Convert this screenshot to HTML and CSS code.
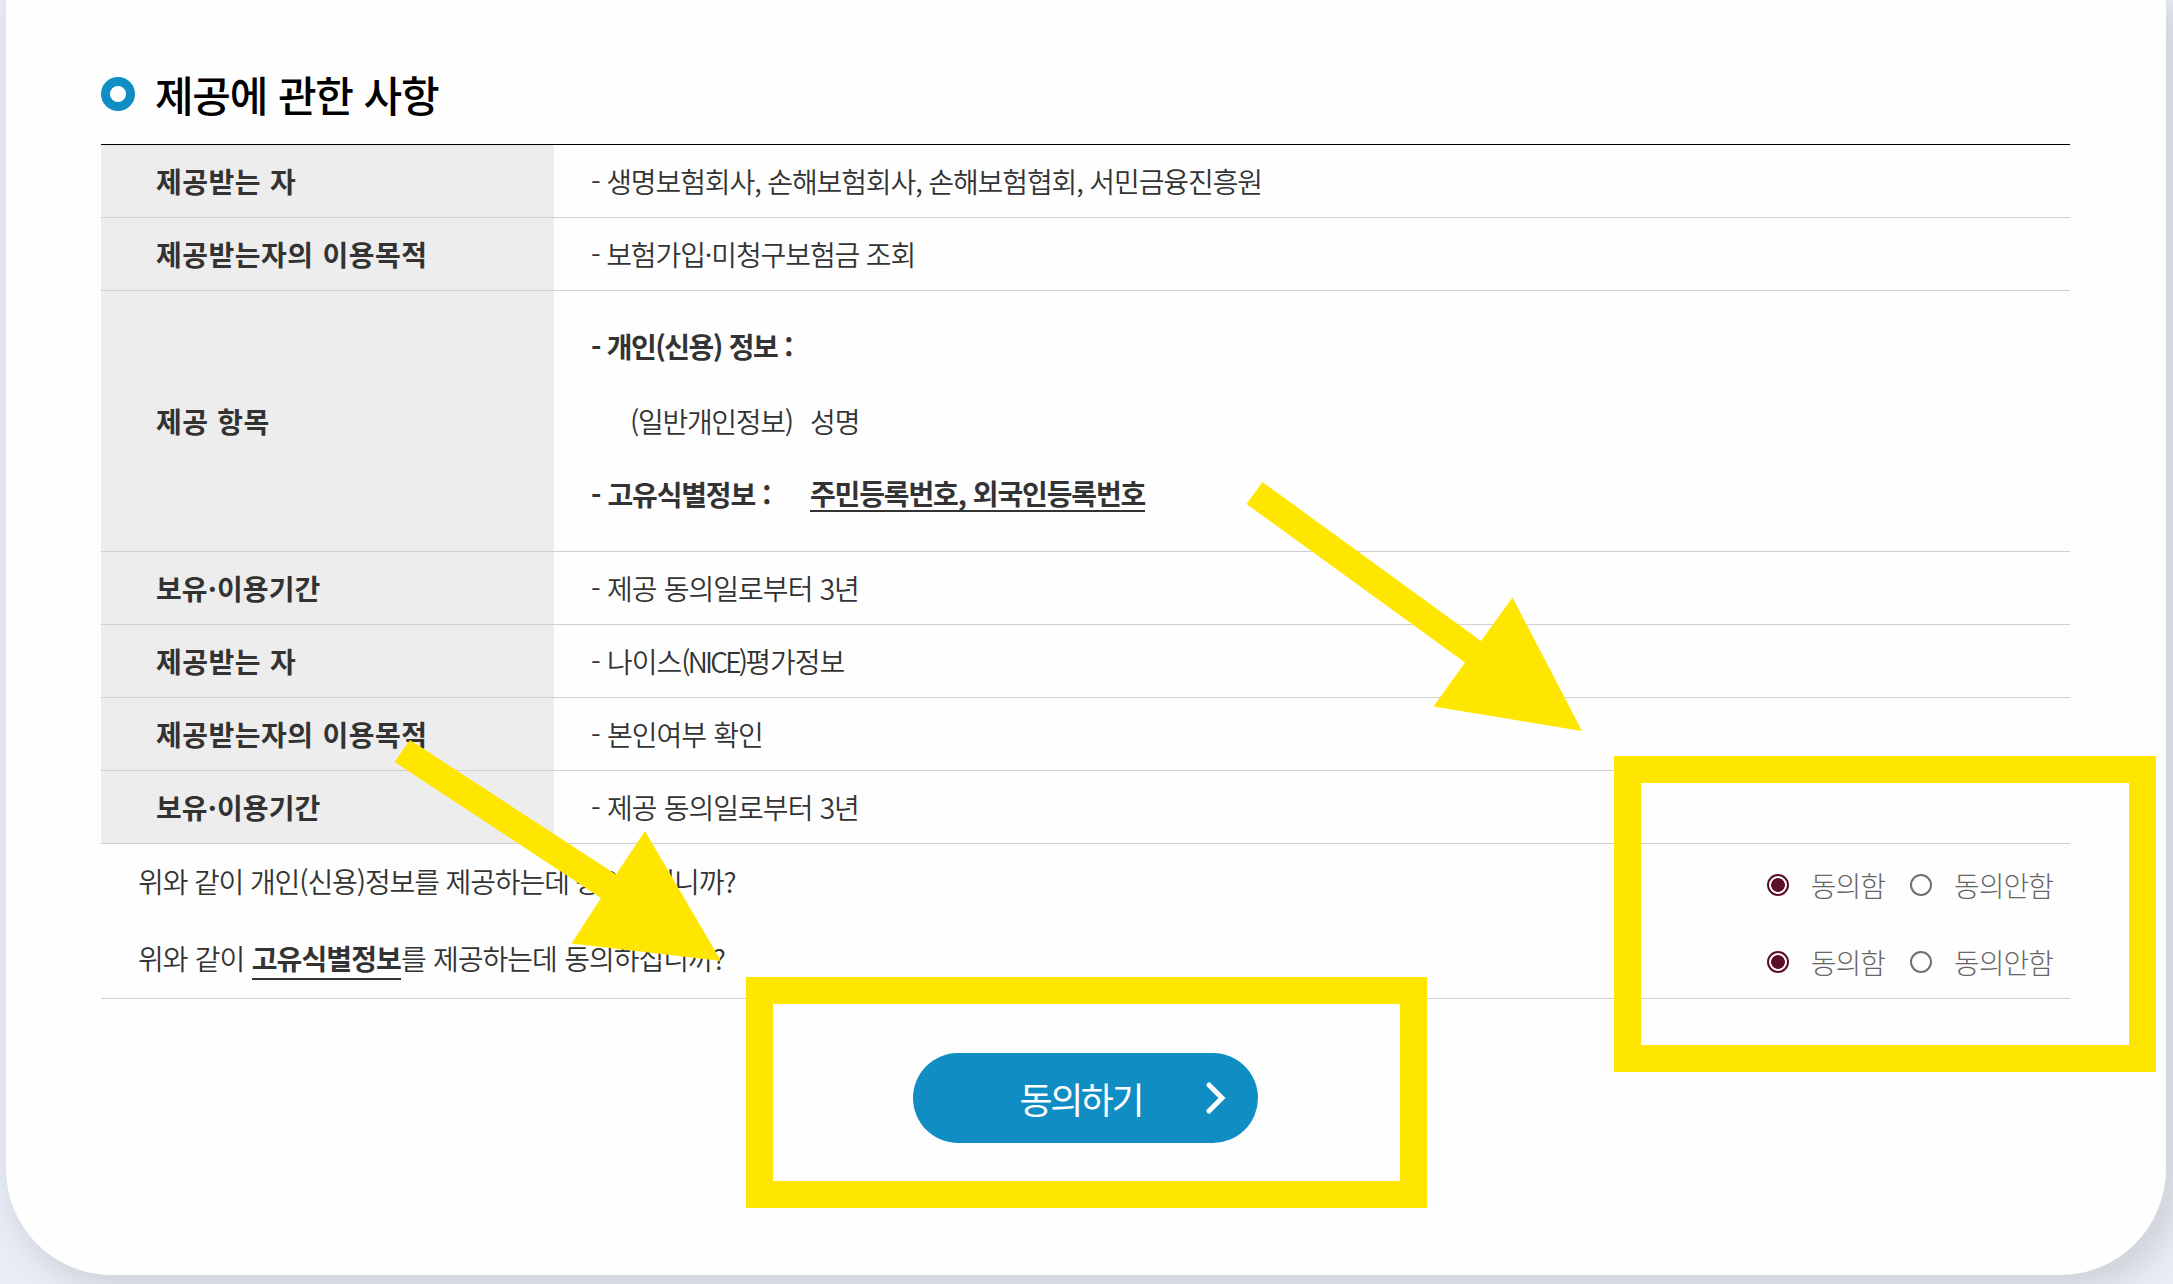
FILE: index.html
```html
<!DOCTYPE html>
<html lang="ko">

<head>
  <meta charset="UTF-8" />
  <meta name="viewport" content="width=device-width, initial-scale=1" />
  <title>제공에 관한 사항</title>
  <link rel="stylesheet" href="styles.css">
</head>

<body>
  <main class="card">
    <h2 class="title"><span class="ring"></span><span class="title-text">제공에 관한 사항</span></h2>

    <table class="info">
      <tbody>
        <tr>
          <th>제공받는 자</th>
          <td class="list">- 생명보험회사, 손해보험회사, 손해보험협회, 서민금융진흥원</td>
        </tr>
        <tr>
          <th>제공받는자의 이용목적</th>
          <td class="list">- 보험가입·미청구보험금 조회</td>
        </tr>
        <tr class="items">
          <th>제공 항목</th>
          <td>
            <p class="item"><b class="credit">- 개인(신용) 정보 :</b></p>
            <p class="item general"><span class="kind">(일반개인정보)</span><span>성명</span></p>
            <p class="item unique"><b class="label">- 고유식별정보 :</b><b class="under">주민등록번호, 외국인등록번호</b></p>
          </td>
        </tr>
        <tr>
          <th class="period">보유·이용기간</th>
          <td>- 제공 동의일로부터 3년</td>
        </tr>
        <tr>
          <th>제공받는 자</th>
          <td>- 나이스<span class="latin">(NICE)</span>평가정보</td>
        </tr>
        <tr>
          <th>제공받는자의 이용목적</th>
          <td>- 본인여부 확인</td>
        </tr>
        <tr>
          <th class="period">보유·이용기간</th>
          <td>- 제공 동의일로부터 3년</td>
        </tr>
      </tbody>
    </table>

    <form class="agree">
      <div class="question">
        <p class="list">위와 같이 개인(신용)정보를 제공하는데 동의하십니까?</p>
        <div class="choices">
          <label><input type="radio" name="agree1" checked /><span>동의함</span></label>
          <label><input type="radio" name="agree1" /><span>동의안함</span></label>
        </div>
      </div>
      <div class="question">
        <p>위와 같이 <b class="under">고유식별정보</b>를 제공하는데 동의하십니까?</p>
        <div class="choices">
          <label><input type="radio" name="agree2" checked /><span>동의함</span></label>
          <label><input type="radio" name="agree2" /><span>동의안함</span></label>
        </div>
      </div>
    </form>

    <button type="button" class="submit">
      <span>동의하기</span>
      <svg class="chevron" width="20" height="32" viewBox="0 0 20 32">
        <path d="M3 3 L16 16 L3 29" />
      </svg>
    </button>
  </main>

  <!-- guide marks over the form -->
  <svg class="arrows" width="2173" height="1284" viewBox="0 0 2173 1284">
    <polygon points="1262.5,482 1246.5,504 1465,662.5 1433.5,706.5 1582,731 1512.5,597.5 1481,641" />
    <polygon points="410,740 394.5,762 601,898 571.5,943.5 721,961 645,831 616,874.5" />
  </svg>
  <div class="mark mark-choices"></div>
  <div class="mark mark-submit"></div>
</body>

</html>
```

FILE: styles.css
```css
* {
  box-sizing: border-box;
}

body {
  margin: 0;
  height: 1284px;
  overflow: hidden;
  position: relative;
  background-color: #e8edf5;
  color: #333;
  font-family: "Noto Sans CJK KR", "Noto Sans", sans-serif;
  font-size: 28px;
  font-weight: 350;
  letter-spacing: -1px;
  word-spacing: 0.5px;
}

p {
  margin: 0;
}

b {
  font-weight: 700;
  letter-spacing: -1.15px;
}

.card {
  width: 2160px;
  height: 1275px;
  margin-left: 6px;
  padding: 48px 96px 0 95px;
  background-color: #fefefe;
  border-radius: 0 0 106px 106px;
  box-shadow: 10px 10px 30px 5px rgba(0, 10, 0, 0.11);
}

.title {
  display: flex;
  align-items: center;
  height: 96px;
  margin: 0;
  color: #000;
  font-size: 42px;
  font-weight: 500;
  letter-spacing: -1.3px;
}

.title-text {
  padding-bottom: 6px;
}

.ring {
  width: 34px;
  height: 34px;
  margin-right: 20px;
  margin-top: -4px;
  border: 9px solid #108ec4;
  border-radius: 50%;
}

.info {
  width: 1969px;
  border-top: 1px solid #000;
  border-spacing: 0;
  table-layout: fixed;
}

.info th,
.info td {
  height: 73px;
  padding: 0 0 0 37px;
  border-bottom: 1px solid #d0d0d0;
  text-align: left;
  line-height: 40px;
}

.info th {
  width: 453px;
  padding-left: 55px;
  background-color: #ededed;
  font-weight: 700;
  letter-spacing: 0.5px;
}

.info .period {
  letter-spacing: 0.1px;
}

.list {
  letter-spacing: -1.1px;
  word-spacing: -0.1px;
}

.latin {
  letter-spacing: -2.8px;
}

.info .items td {
  height: 261px;
}

.item {
  display: flex;
  height: 72px;
  align-items: center;
}

.general {
  height: 78px;
  padding-left: 39px;
}

.unique {
  padding-bottom: 4px;
}

.kind {
  width: 180px;
  letter-spacing: -1.3px;
}

.credit {
  letter-spacing: -1.5px;
}

.label {
  width: 219px;
}

.under {
  border-bottom: 2px solid #333;
  line-height: 34px;
}

.agree {
  height: 155px;
  border-bottom: 1px solid #d0d0d0;
}

.question {
  display: flex;
  justify-content: space-between;
  height: 77px;
  padding: 0 17px 0 37px;
  line-height: 75px;
}

.question .under {
  letter-spacing: -0.9px;
}

.choices {
  display: flex;
  gap: 25px;
  padding-top: 5px;
  color: #666;
  font-weight: 300;
  letter-spacing: -1px;
}

.choices label {
  display: flex;
  align-items: center;
  gap: 22px;
}

.choices input {
  appearance: none;
  width: 22px;
  height: 22px;
  margin: 0;
  border: 2px solid #707070;
  border-radius: 50%;
}

.choices input:checked {
  border-color: #5c0f2b;
  background: radial-gradient(circle, #5c0f2b 6.5px, transparent 7.2px);
}

.submit {
  display: flex;
  align-items: center;
  justify-content: flex-end;
  width: 345px;
  height: 90px;
  margin: 54px 0 0 812px;
  padding: 0 32px 0 0;
  border: 0;
  border-radius: 45px;
  background-color: #108ec4;
  color: #fff;
  font: inherit;
  font-size: 36px;
  font-weight: 400;
  letter-spacing: -2.5px;
}

.chevron {
  margin-left: 64px;
  fill: none;
  stroke: #fff;
  stroke-width: 5;
  stroke-linecap: round;
}

.arrows {
  position: absolute;
  left: 0;
  top: 0;
  fill: #ffe600;
}

.mark {
  position: absolute;
  border: 27px solid #ffe600;
}

.mark-choices {
  left: 1614px;
  top: 756px;
  width: 542px;
  height: 316px;
}

.mark-submit {
  left: 746px;
  top: 977px;
  width: 681px;
  height: 231px;
}
```
